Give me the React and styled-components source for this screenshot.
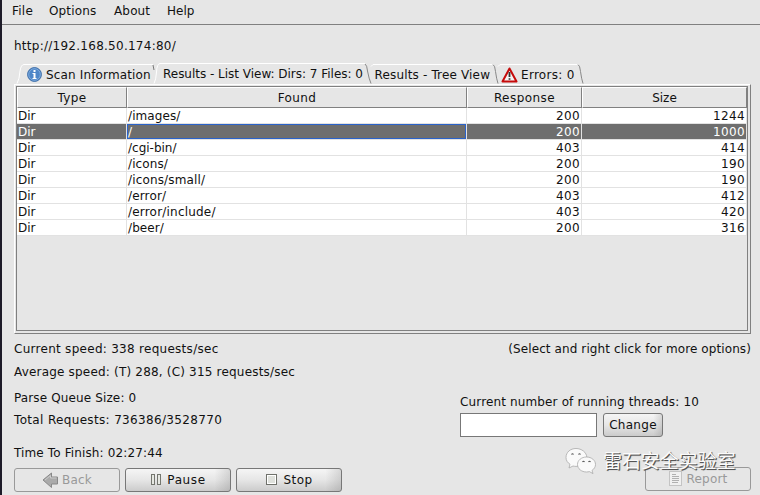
import React from "react";
import styled, { createGlobalStyle } from "styled-components";

const Global = createGlobalStyle`
  * { box-sizing: border-box; }
  body { margin: 0; background: #e6e6e6; overflow: hidden; }
`;

const Window = styled.div`
  position: relative;
  width: 760px;
  height: 495px;
  overflow: hidden;
  display: flex;
  flex-direction: column;
  background: #e6e6e6;
  border-left: 2px solid #1d1b28;
  color: #111;
  font: 12px/14px "DejaVu Sans", sans-serif;
  white-space: pre;
`;

const MenuBar = styled.nav`
  flex: none;
  display: flex;
  height: 25px;
  padding: 4px 0 0 10px;
  border-bottom: 1px solid #808080;
`;
const MenuItem = styled.span`
  width: ${(p) => p.$w}px;
  letter-spacing: ${(p) => p.$ls || 0}px;
`;

const Text = styled.div`
  height: 14px;
  margin-top: ${(p) => p.$mt || 0}px;
  letter-spacing: ${(p) => p.$ls || 0}px;
`;

const Url = styled(Text)`
  flex: none;
  margin: 14px 0 0 12px;
`;

const Tabs = styled.div`
  flex: none;
  display: flex;
  height: 21px;
  margin: 10px 0 0 15px;
`;
const Tab = styled.div`
  position: relative;
  width: ${(p) => p.$w}px;
  padding: ${(p) => (p.$active ? 4 : 5)}px 0 0 ${(p) => p.$pl}px;
  display: flex;
  letter-spacing: ${(p) => p.$ls || 0}px;
`;
const Outline = styled.svg`
  position: absolute;
  left: 0;
  top: 0;
  overflow: visible;
`;
const InfoIcon = styled.svg`
  flex: none;
  width: 15px;
  height: 15px;
  margin: -1px 4px 0 0;
`;
const ErrorIcon = styled.svg`
  flex: none;
  width: 17px;
  height: 16px;
  margin: -1px 3px 0 0;
`;

const Frame = styled.div`
  flex: none;
  width: 737px;
  height: 250px;
  margin-left: 12px;
  border: 1px solid #808080;
  border-left-color: #fff;
  border-top-color: #fff;
  padding: 1px 2px 2px 1px;
`;
const Scroll = styled.div`
  height: 245px;
  border: 1px solid #808080;
`;
const Grid = styled.div`
  width: 730px;
  display: grid;
  grid-template-columns: 110px 340px 115px 165px;
`;
const Head = styled.div`
  height: 21px;
  padding-top: 3px;
  text-align: center;
  border-top: 1px solid #fff;
  border-left: 1px solid #fff;
  border-bottom: 1px solid #808080;
  border-right: 1px solid #808080;
  letter-spacing: ${(p) => p.$ls || 0}px;
`;
const Cell = styled.div`
  height: 16px;
  line-height: 16px;
  padding: 0 1px;
  text-align: ${(p) => (p.$right ? "right" : "left")};
  letter-spacing: ${(p) => p.$ls || 0}px;
  background: ${(p) => (p.$selected ? "#6e6e6e" : "#fff")};
  color: ${(p) => (p.$selected ? "#fff" : "#111")};
  border-right: 1px solid #e2e2e2;
  box-shadow: inset 0 -1px #e2e2e2
    ${(p) => p.$focus && ", inset 0 -2px #2a62c9, inset 0 0 0 1px #2a62c9"};
`;

const Bottom = styled.div`
  flex: 1;
  display: flex;
  justify-content: space-between;
  padding: 8px 9px 0 12px;
`;
const Stats = styled.div`
  width: 400px;
`;
const Side = styled.div`
  display: flex;
  flex-direction: column;
  width: 291px;
`;
const Hint = styled(Text)`
  align-self: flex-end;
`;
const Buttons = styled.div`
  display: flex;
  gap: 5px;
  margin-top: 8px;
`;
const Button = styled.button`
  display: flex;
  align-items: center;
  justify-content: center;
  gap: ${(p) => p.$gap || 5}px;
  width: ${(p) => p.$w || 106}px;
  height: 24px;
  margin: 0;
  padding: 0 0 1px;
  color: ${(p) => (p.disabled ? "#999" : "#111")};
  font: inherit;
  letter-spacing: ${(p) => p.$ls || 0}px;
  border: 1px solid ${(p) => (p.disabled ? "#999" : "#777")};
  border-radius: 3px;
  background: ${(p) =>
    p.disabled
      ? "#e6e6e6"
      : "linear-gradient(90deg, transparent 85%, rgba(110,110,110,.22)), linear-gradient(#f5f5f5, #e6e6e6 50%, #cbcbcb)"};
  svg { flex: none; }
`;
const ThreadForm = styled.div`
  display: flex;
  gap: 6px;
  margin-top: 4px;
`;
const ThreadInput = styled.input`
  width: 137px;
  height: 24px;
  margin: 0;
  border: 1px solid #777;
  background: #fff;
`;
const ReportSlot = styled.div`
  display: flex;
  justify-content: flex-end;
  margin-top: 30px;
`;
const Watermark = styled.div`
  position: absolute;
  left: 561px;
  top: 447px;
  display: flex;
  align-items: center;
  gap: 6px;
  color: #fbfbfb;
  font: 19px/20px "Noto Sans CJK SC", sans-serif;
  letter-spacing: -0.1px;
  text-shadow: 1px 1px 0 #555, 1px 1px 1px #777;
`;
const WatermarkText = styled.span`
  height: 20px;
  margin-top: -2px;
`;

const rows = [
  ["/images/", "200", "1244", 0.1],
  ["/", "200", "1000", 0],
  ["/cgi-bin/", "403", "414", 0],
  ["/icons/", "200", "190", 0.1],
  ["/icons/small/", "200", "190", 0.15],
  ["/error/", "403", "412", 0.15],
  ["/error/include/", "403", "420", 0.2],
  ["/beer/", "200", "316", 0.1],
];

function BackIcon() {
  return (
    <svg width="17" height="16" viewBox="0 0 17 16">
      <path d="M1 8 L9.5 1 V5 H15.5 V12 H9.5 V15.5 Z" fill="#aaa" stroke="#888" />
      <path d="M3 8 L8.5 3.5 V6 H14.5" fill="none" stroke="#ccc" />
    </svg>
  );
}
function PauseIcon() {
  return (
    <svg width="12" height="11" viewBox="0 0 12 11" shapeRendering="crispEdges">
      <path d="M1.500 .5h3v10h-3zM7.500 .5h3v10h-3z" fill="#e6e8e2" stroke="#74766f" />
    </svg>
  );
}
function StopIcon() {
  return (
    <svg width="11" height="11" viewBox="0 0 11 11" shapeRendering="crispEdges">
      <path d="M.5 .5h10v10h-10z" fill="#fff" stroke="#6f716b" />
      <path d="M2 2h7v7h-7z" fill="#dfe1dc" />
    </svg>
  );
}
function ReportIcon() {
  return (
    <svg width="13" height="15" viewBox="0 0 13 15" shapeRendering="crispEdges">
      <path d="M.5 .5h12v14h-12z" fill="#f0f0f0" stroke="#c4c4c4" />
      <path d="M3 3.500h4M3 5.500h7M3 7.500h7M3 9.500h7M3 11.500h6" stroke="#b0b0b0" />
    </svg>
  );
}
function ChatIcon() {
  return (
    <svg width="34" height="28" viewBox="0 0 34 28">
      <g fill="#fafafa" stroke="#aaa" strokeWidth=".8" transform="translate(2 0)">
        <path d="M11 1.500C5.400 1.500 1 5.200 1 10.500c0 2.900 1.500 5.200 4 6.700L4 21l4-2c1 .2 2 .4 3 .4 5.600 0 10.800-3.800 10.800-8.900S16.600 1.500 11 1.500z" />
        <path d="M21.500 10c-5 0-9 3.300-9 7.500s4 7.500 9 7.500c1 0 2-.2 2.900-.4l3.600 2-1-3.200c2.200-1.400 3.500-3.500 3.500-5.900 0-4.200-4-7.500-9-7.500z" />
        <path d="M6.500 7.500q1-1.500 2 0M13.500 7.500q1-1.500 2 0M17.500 15q1-1.500 2 0M23.500 15q1-1.500 2 0" fill="none" stroke="#555" strokeWidth="1.100" />
      </g>
    </svg>
  );
}

function Edge({ w, top = 1.5, left = 2, first, covered }) {
  return (
    <Outline width={w} height="21">
      <path d={first ? `M0 20.500 Q2.500 16 3 8 Q4 ${top} 7 ${top} H${w - 2}` : `M${left} ${top + 2} L${left + 2} ${top} H${w - 4}`} fill="none" stroke="#fff" />
      {covered ? (
        <path d={`M${w - 2} 2 l1 5`} stroke="#777" fill="none" />
      ) : (
        <path d={`M${w - 5} ${top} q2 1 2.500 7 Q${w - 1.5} 16 ${w} 20.500`} stroke="#888" fill="none" />
      )}
    </Outline>
  );
}

export default function App() {
  return (
    <Window>
      <Global />
      <MenuBar>
        <MenuItem $w={37} $ls={0.25}>File</MenuItem>
        <MenuItem $w={65} $ls={0.15}>Options</MenuItem>
        <MenuItem $w={53} $ls={0.15}>About</MenuItem>
        <MenuItem $w={40}>Help</MenuItem>
      </MenuBar>
      <Url $ls={0.26}>http://192.168.50.174:80/</Url>
      <Tabs>
        <Tab $w={138} $pl={10} $ls={0.15}>
          <Edge w={138} first covered />
          <InfoIcon viewBox="0 0 15 15">
            <circle cx="7.500" cy="7.500" r="6.900" fill="#4d86c8" stroke="#3b6ba6" />
            <circle cx="7.500" cy="7.500" r="5.800" fill="none" stroke="#8db5e2" strokeWidth=".8" />
            <path d="M6.500 3h2v2h-2zM5.500 6h3v5h1v1H5.500v-1h1V7h-1z" fill="#fff" />
          </InfoIcon>
          Scan Information
        </Tab>
        <Tab $w={216} $pl={8} $ls={-0.02} $active>
          <Outline width="216" height="21">
            <path d="M-1 20.500 Q1 17 1.500 9 Q2 .5 5 .5 H210" fill="none" stroke="#fff" />
            <path d="M210 1 q2 1 2.500 7 Q214 16 216 20.500" fill="none" stroke="#888" />
          </Outline>
          Results - List View: Dirs: 7 Files: 0
        </Tab>
        <Tab $w={127} $pl={3.5} $ls={0.16}>
          <Edge w={127} left={0} />
          Results - Tree View
        </Tab>
        <Tab $w={85} $pl={3} $ls={0.3}>
          <Edge w={85} left={0} />
          <ErrorIcon viewBox="0 0 17 16">
            <path d="M8.500 1.500 L15.500 14.500 H1.500 Z" fill="#f4f4f4" stroke="#c60b0b" strokeWidth="2" strokeLinejoin="round" />
            <path d="M8.500 5v5M8.500 11.200v1.600" stroke="#333" strokeWidth="1.800" />
          </ErrorIcon>
          Errors: 0
        </Tab>
      </Tabs>
      <Frame>
        <Scroll>
          <Grid>
            <Head $ls={0.3}>Type</Head>
            <Head $ls={0.4}>Found</Head>
            <Head $ls={0.45}>Response</Head>
            <Head>Size</Head>
            {rows.map(([path, code, size, ls]) => {
              const sel = path === "/";
              return (
                <React.Fragment key={path}>
                  <Cell $selected={sel}>Dir</Cell>
                  <Cell $selected={sel} $focus={sel} $ls={ls}>{path}</Cell>
                  <Cell $selected={sel} $right $ls={0.36}>{code}</Cell>
                  <Cell $selected={sel} $right $ls={0.36}>{size}</Cell>
                </React.Fragment>
              );
            })}
          </Grid>
        </Scroll>
      </Frame>
      <Bottom>
        <Stats>
          <Text $ls={0.28}>Current speed: 338 requests/sec</Text>
          <Text $mt={9} $ls={0.19}>Average speed: (T) 288, (C) 315 requests/sec</Text>
          <Text $mt={12} $ls={0.13}>Parse Queue Size: 0</Text>
          <Text $mt={8} $ls={0.34}>Total Requests: 736386/3528770</Text>
          <Text $mt={19} $ls={0.13}>Time To Finish: 02:27:44</Text>
          <Buttons>
            <Button disabled $gap={3} $ls={0.2}><BackIcon />Back</Button>
            <Button $ls={0.6}><PauseIcon />Pause</Button>
            <Button $gap={7} $ls={0.4}><StopIcon />Stop</Button>
          </Buttons>
        </Stats>
        <Side>
          <Hint $ls={0.1}>(Select and right click for more options)</Hint>
          <Text $mt={39} $ls={0.14}>Current number of running threads: 10</Text>
          <ThreadForm>
            <ThreadInput aria-label="Threads" />
            <Button $w={60} $ls={0.3}>Change</Button>
          </ThreadForm>
          <ReportSlot>
            <Button disabled $ls={0.2}><ReportIcon />Report</Button>
          </ReportSlot>
        </Side>
      </Bottom>
      <Watermark><ChatIcon /><WatermarkText>雷石安全实验室</WatermarkText></Watermark>
    </Window>
  );
}
